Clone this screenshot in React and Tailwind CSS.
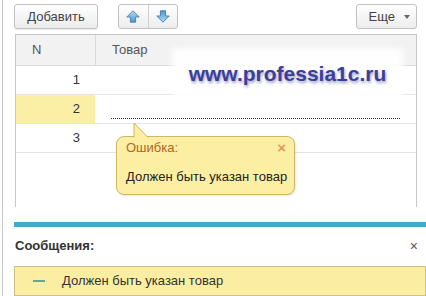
import { useState } from "react";

const rows = [
  { n: 1, active: false },
  { n: 2, active: true },
  { n: 3, active: false },
];

function ArrowIcon({ down }) {
  return (
    <svg width="14" height="13" viewBox="0 0 14 13" className={down ? "rotate-180" : ""}>
      <defs>
        <linearGradient id={down ? "ad" : "au"} x1="0" y1="0" x2="0" y2="1">
          <stop offset="0" stopColor="#b9dcf3" />
          <stop offset="1" stopColor="#4f95c9" />
        </linearGradient>
      </defs>
      <path
        d="M7 0.8 L13.2 7 L9.6 7 L9.6 12.2 L4.4 12.2 L4.4 7 L0.8 7 Z"
        fill={`url(#${down ? "ad" : "au"})`}
        stroke="#3f7fb3"
        strokeWidth="0.9"
        strokeLinejoin="round"
      />
    </svg>
  );
}

export default function App() {
  const [tip, setTip] = useState(true);

  return (
    <div className="h-[296px] w-[426px] overflow-hidden bg-white pl-[2px] font-['Liberation_Sans',Arial,sans-serif] text-[13px] text-[#333]">
      <div className="relative h-full border-l border-[#c9c9c9] pl-[11px] pr-[9px] pt-[4px]">
        {/* toolbar */}
        <div className="flex h-[25px] items-stretch">
          <button className="w-[84px] rounded-[3px] border border-[#c2c2c2] bg-gradient-to-b from-white to-[#ececec] text-[13px] text-[#444] shadow-[0_1px_1px_rgba(0,0,0,0.08)]">
            Добавить
          </button>
          <div className="ml-[20px] flex w-[60px] rounded-[3px] border border-[#c2c2c2] bg-gradient-to-b from-white to-[#ececec]">
            <button className="flex flex-1 items-center justify-center border-r border-[#cfcfcf]">
              <ArrowIcon />
            </button>
            <button className="flex flex-1 items-center justify-center">
              <ArrowIcon down />
            </button>
          </div>
          <button className="ml-auto flex w-[61px] items-center justify-end gap-[9px] rounded-[3px] border border-[#c2c2c2] bg-gradient-to-b from-white to-[#ececec] pr-[6px] text-[13px] text-[#444]">
            Еще
            <span className="h-0 w-0 border-x-[3px] border-t-[4px] border-x-transparent border-t-[#666]" />
          </button>
        </div>

        {/* table */}
        <div className="mt-[5px] ml-[1px] h-[173px] border-x border-t border-[#c6c6c6]">
          <div className="flex h-[31px] border-b border-[#dcdcdc] bg-[#f2f2f2] text-[#555]">
            <div className="flex w-[80px] items-center border-r border-[#d9d9d9] pl-[16px]">N</div>
            <div className="flex items-center pl-[16px]">Товар</div>
          </div>
          {rows.map((r) => (
            <div key={r.n} className="flex h-[29px] border-b border-[#e4e4e4]">
              <div
                className={`flex w-[79px] items-center justify-end pr-[15px] text-[#333] ${
                  r.active ? "bg-[#fbefa6]" : ""
                }`}
              >
                {r.n}
              </div>
              <div className="flex flex-1 items-end pb-[4px] pl-[16px] pr-[16px]">
                {r.active && <div className="h-0 w-full border-b border-dotted border-[#333]" />}
              </div>
            </div>
          ))}
        </div>

        {/* messages */}
        <div className="-mr-[9px] mt-[15px] h-[5px] bg-[#47a6ca]" />
        <div className="mt-[9px] flex items-center justify-between pl-[1px]">
          <span className="text-[13px] font-bold text-[#333]">Сообщения:</span>
          <span className="mr-[-1px] text-[14px] leading-none text-[#555]">×</span>
        </div>
        <div className="-mr-[9px] mt-[10px] flex h-[30px] items-center border border-[#cbbf8c] bg-[#fbeea3] pl-[18px]">
          <span className="h-[2px] w-[12px] bg-[#5aa99a]" />
          <span className="ml-[17px] text-[#333]">Должен быть указан товар</span>
        </div>

        {/* watermark */}
        <div className="absolute left-[173px] top-[52px] flex h-[43px] w-[223px] items-center justify-center bg-white/90 shadow-[0_0_6px_4px_rgba(255,255,255,0.9)]">
          <span className="text-[21px] font-bold text-[#3b3f9c] [text-shadow:1px_2px_3px_rgba(40,40,120,0.45)]">
            www.professia1c.ru
          </span>
        </div>

        {/* tooltip */}
        {tip && (
          <div className="absolute left-[113px] top-[136px] h-[59px] w-[179px] rounded-[8px] border border-[#cdb766] bg-[#fcefa4] shadow-[1px_1px_2px_rgba(0,0,0,0.1)]">
            <svg
              width="16"
              height="16"
              viewBox="0 0 16 16"
              className="absolute left-[16px] top-[-15px]"
            >
              <path d="M1 15.5 L1 1 L15 15.5" fill="#fcefa4" stroke="#cdb766" strokeWidth="1" />
            </svg>
            <div className="flex items-center justify-between pl-[9px] pr-[8px] pt-[1px]">
              <span className="text-[13px] text-[#b5651d]">Ошибка:</span>
              <button
                onClick={() => setTip(false)}
                className="text-[15px] font-bold leading-none text-[#e39a5c]"
              >
                ×
              </button>
            </div>
            <div className="mt-[9px] pl-[9px] text-[13px] text-[#222]">Должен быть указан товар</div>
          </div>
        )}
      </div>
    </div>
  );
}
